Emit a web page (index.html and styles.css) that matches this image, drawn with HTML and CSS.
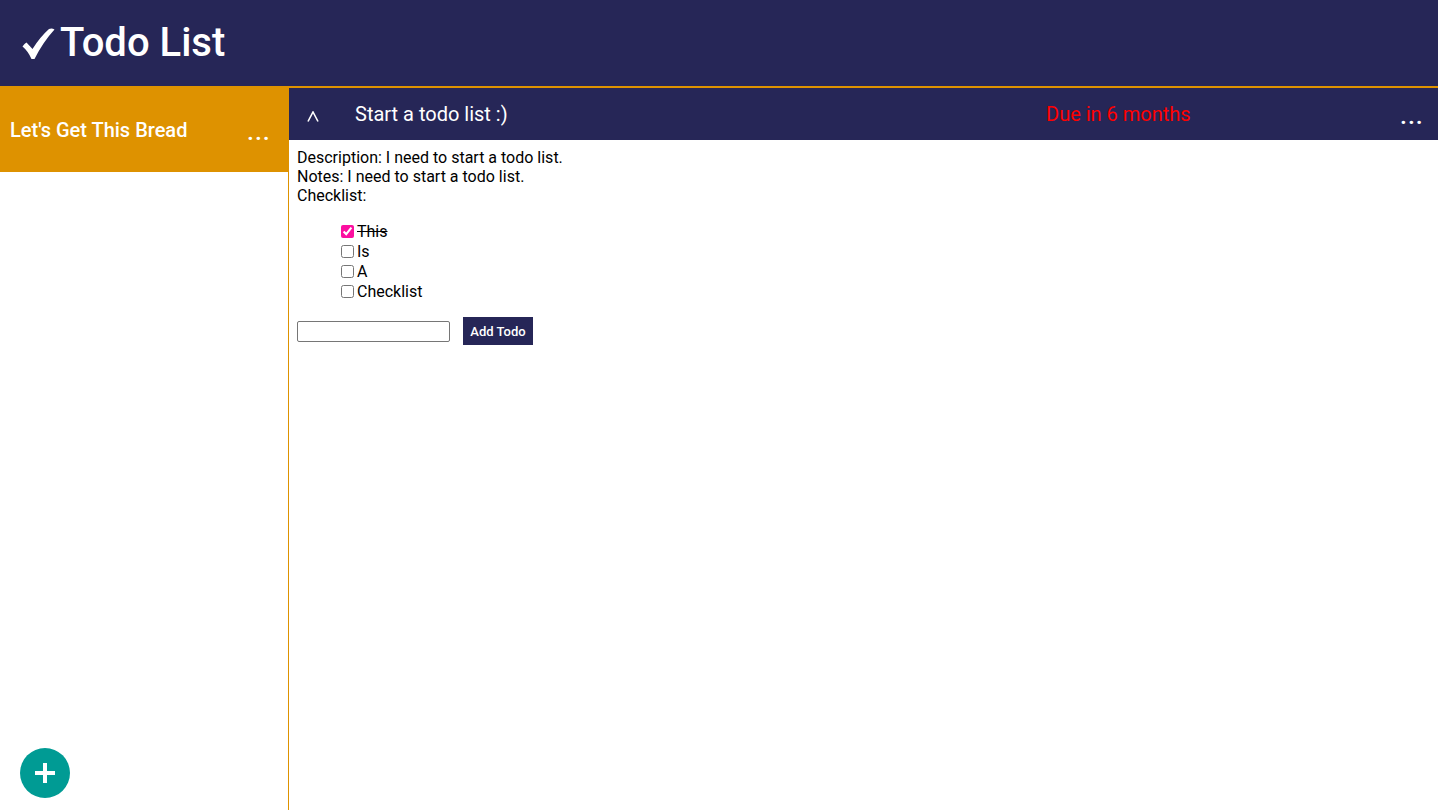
FILE: index.html
```html
<!DOCTYPE html>
<html>
<head>
<meta charset="utf-8">
<title>Todo List</title>
<link rel="stylesheet" href="styles.css">
</head>
<body>
<header class="top">
  <h1 class="brand"><svg class="check" width="33" height="32" viewBox="0 0 33 32"><path d="M0.5 18.5 Q2.5 15.5 4.5 14.5 L10.5 21 Q18 9 27 1 Q30 0 32.5 1.5 Q21 14 12.5 31 L9.5 31 Q6 23 0.5 18.5 Z" fill="#fff"/></svg>Todo List</h1>
</header>
<div class="layout">
  <aside class="sidebar">
    <div class="project">
      <span class="project-name">Let's Get This Bread</span>
      <span class="dots">...</span>
    </div>
  </aside>
  <main class="content">
    <div class="todo-bar">
      <span class="caret"><svg width="12" height="11" viewBox="0 0 12 11"><polyline points="1,10.5 6,1 11,10.5" fill="none" stroke="#fff" stroke-width="1.6"/></svg></span>
      <span class="todo-title">Start a todo list :)</span>
      <span class="due">Due in 6 months</span>
      <span class="dots">...</span>
    </div>
    <div class="todo-body">
      <div>Description: I need to start a todo list.</div>
      <div>Notes: I need to start a todo list.</div>
      <div>Checklist:</div>
      <ul class="checklist">
        <li><input type="checkbox" checked><span class="done">This</span></li>
        <li><input type="checkbox"><span>Is</span></li>
        <li><input type="checkbox"><span>A</span></li>
        <li><input type="checkbox"><span>Checklist</span></li>
      </ul>
      <form class="add-form">
        <input type="text" class="add-input">
        <button type="button" class="add-btn">Add Todo</button>
      </form>
    </div>
  </main>
</div>
<button class="fab" type="button"><svg width="22" height="22" viewBox="0 0 22 22"><rect x="9" y="1" width="4" height="20" fill="#fff"/><rect x="1" y="9" width="20" height="4" fill="#fff"/></svg></button>
</body>
</html>
```
FILE: styles.css
```css
* { box-sizing: border-box; }
html, body { margin: 0; padding: 0; height: 100%; }
body {
  font-family: Roboto, "Liberation Sans", sans-serif;
  font-size: 16px;
  color: #000;
  background: #fff;
  display: flex;
  flex-direction: column;
  overflow: hidden;
}
.top {
  height: 88px;
  background: #262657;
  border-bottom: 2px solid #de9200;
  display: flex;
  align-items: center;
  padding-left: 22px;
  flex-shrink: 0;
}
.brand {
  margin: 0;
  font-size: 40px;
  font-weight: 500;
  color: #fff;
  line-height: 1;
  display: flex;
  align-items: center;
  padding-bottom: 1px;
}
.check {
  display: block;
  margin-right: 5px;
  margin-top: 2px;
}
.layout {
  flex: 1;
  display: flex;
  min-height: 0;
}
.sidebar {
  width: 289px;
  border-right: 1px solid #de9200;
  flex-shrink: 0;
}
.project {
  height: 84px;
  background: #de9200;
  color: #fff;
  display: flex;
  align-items: center;
  justify-content: space-between;
  padding: 0 17px 0 10px;
  font-size: 20px;
  font-weight: 500;
}
.dots {
  font-size: 22px;
  font-weight: 700;
  letter-spacing: 1.5px;
  line-height: 1;
  padding-top: 6px;
}
.content {
  flex: 1;
  min-width: 0;
}
.todo-bar {
  height: 52px;
  background: #262657;
  color: #fff;
  display: flex;
  align-items: center;
  font-size: 20px;
}
.caret {
  width: 66px;
  padding-left: 18px;
  display: flex;
  align-items: center;
  padding-top: 4px;
}
.todo-title { width: 691px; }
.due { color: #ff0000; flex: 1; }
.todo-bar .dots { padding-right: 14px; }
.todo-body {
  padding: 8px 8px;
  line-height: 19px;
}
.checklist {
  list-style: none;
  margin: 16px 0;
  padding-left: 40px;
}
.checklist li {
  display: flex;
  align-items: center;
  height: 20px;
}
.checklist input {
  margin: 3px 3px 3px 4px;
  width: 13px;
  height: 13px;
  accent-color: #fc0fa0;
}
.done { text-decoration: line-through; }
.add-form {
  display: flex;
  align-items: center;
  gap: 13px;
}
.add-input {
  width: 153px;
  height: 21px;
  border: 1px solid #767676;
  border-radius: 2px;
  font-size: 13px;
}
.add-btn {
  background: #262657;
  color: #fff;
  border: none;
  font-family: Roboto, "Liberation Sans", sans-serif;
  font-size: 13px;
  font-weight: 500;
  height: 28px;
  width: 70px;
  padding: 0;
  cursor: pointer;
}
.fab {
  position: fixed;
  left: 20px;
  top: 748px;
  width: 50px;
  height: 50px;
  border-radius: 50%;
  background: #009b94;
  border: none;
  padding: 0;
  display: flex;
  align-items: center;
  justify-content: center;
}
```
